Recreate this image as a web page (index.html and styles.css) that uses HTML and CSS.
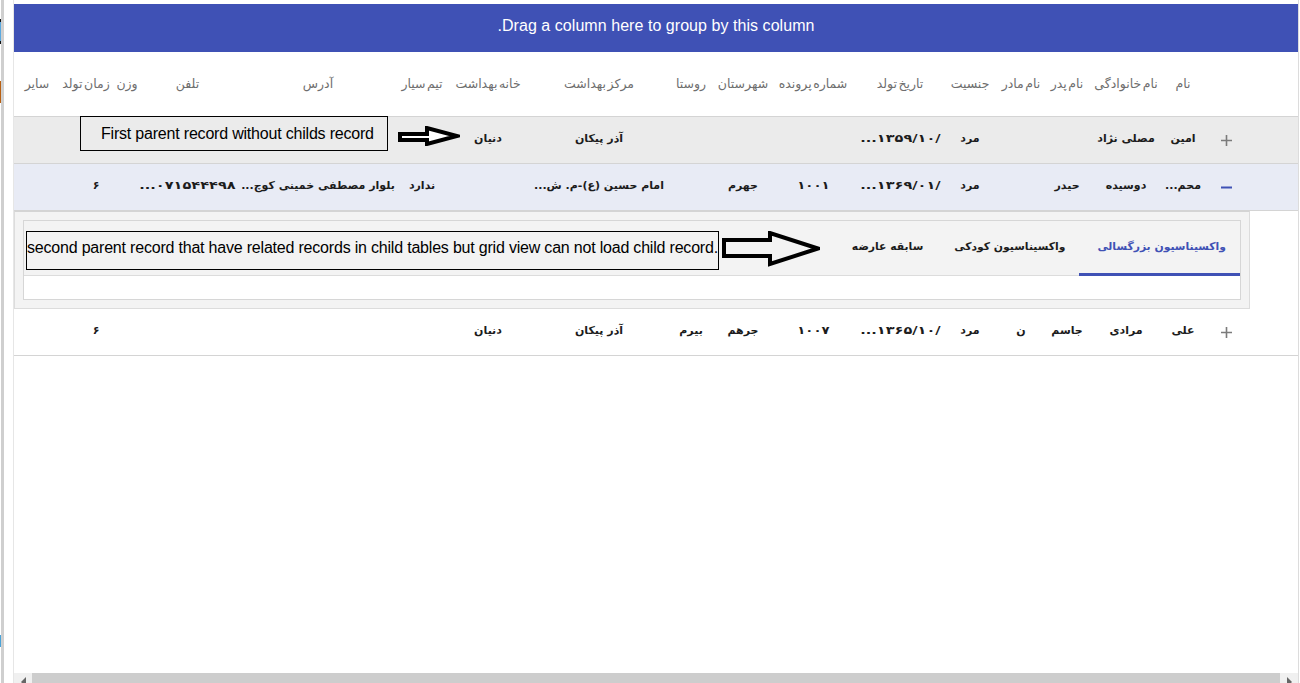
FILE: index.html
```html
<!DOCTYPE html>
<html lang="fa">
<head>
<meta charset="utf-8">
<title>Grid</title>
<link rel="stylesheet" href="styles.css">
</head>
<body>
<div class="page">
  <aside class="rail">
    <div class="bits">
      <span class="bit bit-blue"></span>
      <span class="bit bit-orange"></span>
      <span class="bit bit-low"></span>
    </div>
    <div class="rail-line"></div>
  </aside>
  <main class="main">
    <div class="group-bar" dir="rtl">Drag a column here to group by this column.</div>
    <div class="row head" dir="rtl">
      <div class="cell"></div>
      <div class="cell">نام</div><div class="cell">نام خانوادگی</div><div class="cell">نام پدر</div><div class="cell">نام مادر</div><div class="cell">جنسیت</div><div class="cell">تاریخ تولد</div><div class="cell">شماره پرونده</div><div class="cell">شهرستان</div><div class="cell">روستا</div><div class="cell">مرکز بهداشت</div><div class="cell">خانه بهداشت</div><div class="cell">تیم سیار</div><div class="cell">آدرس</div><div class="cell">تلفن</div><div class="cell">وزن</div><div class="cell">زمان تولد</div><div class="cell">سایر</div>
    </div>
    <div class="row data alt" dir="rtl">
      <div class="cell toggle"><svg class="ico" viewBox="0 0 11 11"><path d="M5.5 0v11M0 5.5h11"/></svg></div>
      <div class="cell">امین</div><div class="cell">مصلی نژاد</div><div class="cell"></div><div class="cell"></div><div class="cell">مرد</div><div class="cell"><bdo class="num" dir="ltr">...۱۳۵۹/۱۰/</bdo></div><div class="cell"></div><div class="cell"></div><div class="cell"></div><div class="cell">آذر پیکان</div><div class="cell">دنیان</div><div class="cell"></div><div class="cell"></div><div class="cell"></div><div class="cell"></div><div class="cell"></div><div class="cell"></div>
      <div class="note note-one" dir="ltr">First parent record without childs record</div>
      <svg class="arrow arrow-one" viewBox="0 0 62 20"><path d="M2 8h27V2l30 8-30 8v-4H2z"/></svg>
    </div>
    <div class="row data open" dir="rtl">
      <div class="cell toggle"><svg class="ico ico-minus" viewBox="0 0 11 11"><path d="M0 5.5h11"/></svg></div>
      <div class="cell">محم...</div><div class="cell">دوسیده</div><div class="cell">حیدر</div><div class="cell"></div><div class="cell">مرد</div><div class="cell"><bdo class="num" dir="ltr">...۱۳۶۹/۰۱/</bdo></div><div class="cell"><span class="num num-short">۱۰۰۱</span></div><div class="cell">جهرم</div><div class="cell"></div><div class="cell">امام حسین (ع)-م. ش...</div><div class="cell"></div><div class="cell">ندارد</div><div class="cell">بلوار مصطفی خمینی کوچ...</div><div class="cell"><bdo class="num" dir="ltr">...۰۷۱۵۴۴۴۹۸</bdo></div><div class="cell"></div><div class="cell shift">۶</div><div class="cell"></div>
    </div>
    <section class="detail">
      <div class="tabbox">
        <div class="tabs" dir="rtl">
          <div class="tab active">واکسیناسیون بزرگسالی</div>
          <div class="tab">واکسیناسیون کودکی</div>
          <div class="tab">سابقه عارضه</div>
          <div class="note note-two" dir="ltr">second parent record that have related records in child tables but grid view can not load child record.</div>
          <svg class="arrow arrow-two" viewBox="0 0 98 36"><path d="M2 9h46V2l48 15.5-48 15.5v-8H2z"/></svg>
        </div>
        <div class="tab-body"></div>
      </div>
    </section>
    <div class="row data" dir="rtl">
      <div class="cell toggle"><svg class="ico" viewBox="0 0 11 11"><path d="M5.5 0v11M0 5.5h11"/></svg></div>
      <div class="cell">علی</div><div class="cell">مرادی</div><div class="cell">جاسم</div><div class="cell">ن</div><div class="cell">مرد</div><div class="cell"><bdo class="num" dir="ltr">...۱۳۶۵/۱۰/</bdo></div><div class="cell"><span class="num num-short">۱۰۰۷</span></div><div class="cell">جرهم</div><div class="cell">بیرم</div><div class="cell">آذر پیکان</div><div class="cell">دنیان</div><div class="cell"></div><div class="cell"></div><div class="cell"></div><div class="cell"></div><div class="cell shift">۶</div><div class="cell"></div>
    </div>
    <div class="spacer"></div>
    <div class="scrollbar">
      <div class="scroll-btn"><span class="tri tri-left"></span></div>
      <div class="scroll-thumb"></div>
      <div class="scroll-btn"><span class="tri tri-right"></span></div>
    </div>
  </main>
  <div class="edge"></div>
</div>
</body>
</html>
```
FILE: styles.css
```css
* { box-sizing: border-box; }
html, body { margin: 0; height: 683px; overflow: hidden; background: #fff; }
body { font-family: "DejaVu Sans", "Liberation Sans", sans-serif; }
.page { display: flex; height: 683px; }

.rail { width: 14px; flex: none; display: flex; border-right: 1px solid #e6e6e6; }
.bits { width: 1px; display: flex; flex-direction: column; }
.bit { display: block; width: 1px; }
.bit-blue { margin-top: 19px; height: 25px; background: linear-gradient(#111 0 3px, #5aa9e0 3px 22px, #111 22px); }
.bit-orange { margin-top: 37px; height: 22px; background: #b85f10; }
.bit-low { margin-top: 532px; height: 12px; background: #4aa3d8; }
.rail-line { width: 3px; background: #cfcfcf; }

.main { width: 1284px; flex: none; display: flex; flex-direction: column; padding-top: 4px; }
.edge { width: 2px; flex: none; border-left: 1px solid #dcdcdc; }

.group-bar { height: 48px; background: #3f51b5; color: #fff; font: 16px/44px "Liberation Sans", sans-serif; letter-spacing: 0.05px; text-align: center; }

.row { display: grid; grid-template-columns: 93px 44px 70px 48px 44px 58px 82px 92px 48px 56px 128px 94px 38px 170px 91px 30px 52px 46px; border-bottom: 1px solid #d4d4d4; position: relative; }
.cell { display: flex; justify-content: center; align-items: center; white-space: nowrap; min-width: 0; }
.head { height: 65px; color: #6e6e6e; font-size: 12.5px; word-spacing: -2.5px; }
.head .cell { padding-bottom: 2px; }
.data { height: 47px; color: #1c1c1c; font-size: 11px; font-weight: 700; }
.data .cell { padding-bottom: 3px; }
.alt { background: #ebebeb; }
.open { background: #e8ebf5; }
.data .toggle { width: 42px; justify-self: end; padding-bottom: 0; }
.shift { padding-left: 20px; }
.num { display: inline-block; transform: scaleX(1.32); }
.num-short { transform: scaleX(1.2); }

.ico { width: 11px; height: 11px; stroke: #7b7b7b; stroke-width: 1.6; fill: none; }
.ico-minus { stroke: #3f51b5; stroke-width: 2; }

.detail { width: 1236px; height: 98px; background: #f3f3f3; border: 1px solid #dcdcdc; border-top-color: #d4d4d4; padding: 8px; }
.tabbox { height: 80px; border: 1px solid #d6d6d6; display: flex; flex-direction: column; }
.tabs { height: 55px; display: flex; position: relative; border-bottom: 1px solid #dcdcdc; }
.tab { padding: 0 14px 4px 17px; display: flex; align-items: center; font-size: 10.8px; font-weight: 700; color: #1c1c1c; white-space: nowrap; }
.tab.active { color: #3f51b5; border-bottom: 3px solid #3f51b5; padding: 0 14px 1px 18px; margin-bottom: -1px; }
.tab-body { flex: 1; background: #fff; }

.note { position: absolute; border: 1px solid #000; color: #000; font: 16px/1 "Liberation Sans", sans-serif; letter-spacing: -0.2px; white-space: nowrap; display: flex; align-items: center; }
.note-one { left: 66px; top: -1px; width: 308px; height: 35px; padding-left: 20px; background: #ebebeb; }
.note-two { left: 2px; top: 10px; width: 693px; height: 39px; padding-bottom: 5px; background: #f3f3f3; }

.arrow { position: absolute; stroke: #000; stroke-linejoin: miter; }
.arrow-one { left: 384px; top: 9px; width: 62px; height: 20px; stroke-width: 4; fill: #fff; }
.arrow-two { left: 698px; top: 10px; width: 98px; height: 36px; stroke-width: 4; fill: #f3f3f3; }

.spacer { flex: 1; }
.scrollbar { height: 10px; display: flex; background: #f0f0f0; overflow: hidden; }
.scroll-btn { width: 18px; flex: none; display: flex; justify-content: center; padding-top: 4px; }
.scroll-thumb { flex: 1; background: #cdcdcd; }
.tri { width: 0; height: 0; border-top: 5px solid transparent; border-bottom: 5px solid transparent; }
.tri-left { border-right: 5px solid #666; }
.tri-right { border-left: 5px solid #666; }
```
